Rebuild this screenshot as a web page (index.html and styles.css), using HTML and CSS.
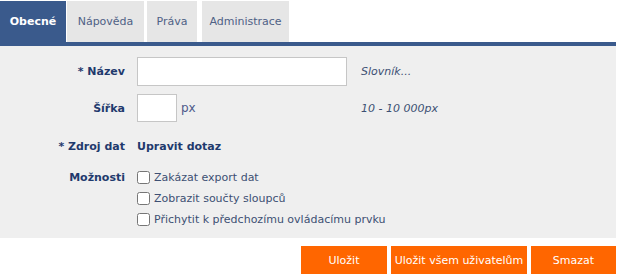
FILE: index.html
```html
<!DOCTYPE html>
<html lang="cs">
<head>
<meta charset="utf-8">
<title>Obecné</title>
<link rel="stylesheet" href="styles.css">
</head>
<body>
<div class="page">
  <nav class="tabs">
    <span class="tab active">Obecné</span>
    <span class="tab">Nápověda</span>
    <span class="tab">Práva</span>
    <span class="tab">Administrace</span>
  </nav>
  <div class="tabline"></div>
  <section class="panel">
    <div class="row row-name">
      <label class="lbl">* Název</label>
      <div class="field"><input class="input wide" type="text"></div>
      <div class="hint">Slovník...</div>
    </div>
    <div class="row row-width">
      <label class="lbl">Šířka</label>
      <div class="field"><input class="input narrow" type="text"><span class="unit">px</span></div>
      <div class="hint">10 - 10 000px</div>
    </div>
    <div class="row row-source">
      <label class="lbl">* Zdroj dat</label>
      <div class="field"><span class="link">Upravit dotaz</span></div>
      <div></div>
    </div>
    <div class="row row-options">
      <label class="lbl">Možnosti</label>
      <div class="checks">
        <label class="check"><input type="checkbox"><span>Zakázat export dat</span></label>
        <label class="check"><input type="checkbox"><span>Zobrazit součty sloupců</span></label>
        <label class="check"><input type="checkbox"><span>Přichytit k předchozímu ovládacímu prvku</span></label>
      </div>
    </div>
  </section>
  <div class="actions">
    <button class="btn b1">Uložit</button>
    <button class="btn b2">Uložit všem uživatelům</button>
    <button class="btn b3">Smazat</button>
  </div>
</div>
</body>
</html>
```
FILE: styles.css
```css
* { box-sizing: border-box; }
html, body { margin: 0; padding: 0; background: #ffffff; }
body {
  font-family: "DejaVu Sans", Verdana, sans-serif;
  font-size: 11px;
  color: #3d4f73;
}
.page { width: 616px; }
.tabs {
  display: flex;
  padding-top: 1px;
  height: 42px;
}
.tab {
  display: flex;
  align-items: center;
  justify-content: center;
  height: 41px;
  padding: 0;
  background: #e6e6e6;
  color: #4f6185;
}
.tab.active {
  width: 66px;
  background: #3a5a8c;
  color: #ffffff;
  font-weight: bold;
}
.tab:nth-child(2) { width: 77px; margin-left: 1px; }
.tab:nth-child(3) { width: 50px; margin-left: 3px; }
.tab:nth-child(4) { width: 87px; margin-left: 5px; }
.tabline { height: 4px; background: #3a5a8c; }
.panel {
  background: #efefef;
  padding: 11px 0 8px 0;
  display: flex;
  flex-direction: column;
}
.row {
  display: grid;
  grid-template-columns: 125px 210px auto;
  column-gap: 12px;
  align-items: center;
}
.row > .hint { margin-left: 2px; }
.row-name { height: 29px; }
.row-width { height: 28px; margin-top: 8px; }
.row-source { height: 20px; margin-top: 14px; }
.row-options { margin-top: 11px; align-items: start; grid-template-columns: 125px auto; }
.lbl {
  text-align: right;
  font-weight: bold;
  color: #1f3a6d;
}
.row-options .lbl { line-height: 21px; }
.field { display: flex; align-items: center; height: 100%; }
.input {
  height: 100%;
  border: 1px solid #c6c6c6;
  background: #ffffff;
  margin: 0;
  padding: 0 4px;
  font: inherit;
}
.wide { width: 210px; }
.narrow { width: 40px; }
.unit { margin-left: 4px; color: #4d5a8a; font-size: 12px; }
.hint { font-style: italic; color: #3d4f73; }
.link { font-weight: bold; color: #1f3a6d; }
.checks { display: flex; flex-direction: column; }
.check {
  display: flex;
  align-items: center;
  height: 21px;
  font-size: 11px;
}
.check input {
  width: 13px;
  height: 13px;
  margin: 0 4px 0 0;
}
.actions {
  display: flex;
  justify-content: flex-end;
  gap: 4px;
  padding-top: 8px;
}
.btn {
  height: 28px;
  border: none;
  background: #ff6600;
  color: #ffffff;
  font-family: inherit;
  font-size: 11px;
  padding: 0;
}
.b1 { width: 86px; }
.b2 { width: 136px; }
.b3 { width: 85px; }
```
